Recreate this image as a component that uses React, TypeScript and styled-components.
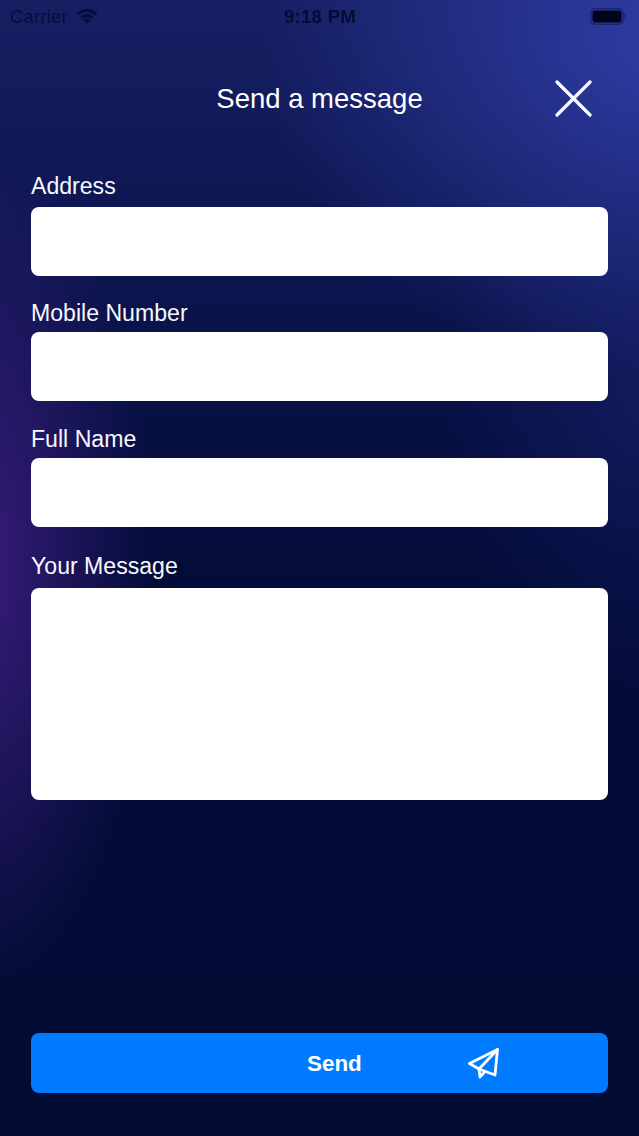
import React from "react";
import styled, { createGlobalStyle } from "styled-components";

const GlobalStyle = createGlobalStyle`
  html, body {
    margin: 0;
    padding: 0;
    background: #020b35;
  }
`;

const Page = styled.div`
  width: 639px;
  height: 1136px;
  overflow: hidden;
  display: flex;
  flex-direction: column;
  font-family: "Liberation Sans", Arial, sans-serif;
  color: #fff;
  background:
    radial-gradient(ellipse 400px 340px at 660px 40px, rgba(48, 62, 168, 0.95), rgba(48, 62, 168, 0) 100%),
    radial-gradient(ellipse 185px 430px at -30px 570px, rgba(62, 30, 130, 0.95), rgba(62, 30, 130, 0) 100%),
    radial-gradient(ellipse 220px 300px at 660px 400px, rgba(30, 38, 120, 0.5), rgba(30, 38, 120, 0) 100%),
    linear-gradient(180deg, #161f62 0%, #111a58 12%, #0a134a 28%, #030c3a 48%, #020b33 100%);
`;

const StatusBar = styled.div`
  height: 33px;
  flex: none;
  display: grid;
  grid-template-columns: 1fr auto 1fr;
  align-items: center;
  padding: 0 13px 0 10px;
  color: #070d3a;
  font-size: 18.5px;
  filter: blur(0.5px);
`;

const StatusLeft = styled.div`
  display: flex;
  align-items: center;
  gap: 8px;
`;

const Carrier = styled.span`
  letter-spacing: 0.2px;
`;

const Clock = styled.span`
  font-weight: 700;
  letter-spacing: 0.3px;
  color: #060b30;
  padding-left: 4px;
`;

const StatusRight = styled.div`
  display: flex;
  justify-content: flex-end;
`;

const Header = styled.header`
  position: relative;
  box-sizing: border-box;
  height: 140px;
  padding-bottom: 8px;
  flex: none;
  display: flex;
  align-items: center;
  justify-content: center;
`;

const Title = styled.h1`
  margin: 0;
  font-size: 27.5px;
  font-weight: 400;
`;

const CloseButton = styled.button`
  position: absolute;
  right: 47px;
  top: 47px;
  width: 37px;
  height: 37px;
  padding: 0;
  border: 0;
  background: none;
  color: #fff;
`;

const Form = styled.form`
  flex: 1;
  display: flex;
  flex-direction: column;
  padding: 0 31px;
`;

const Field = styled.label<{ $top: number }>`
  display: block;
  margin-top: ${(p) => p.$top}px;
`;

const FieldLabel = styled.span<{ $gap: number }>`
  display: block;
  margin-bottom: ${(p) => p.$gap}px;
  font-size: 23.1px;
  line-height: 27px;
  color: #f6f8ff;
`;

const Input = styled.div<{ $height: number }>`
  height: ${(p) => p.$height}px;
  background: #fff;
  border-radius: 8px;
`;

const SendButton = styled.button`
  margin-top: auto;
  margin-bottom: 43px;
  height: 60px;
  display: flex;
  align-items: center;
  padding: 2px 0 0 276px;
  gap: 104px;
  border: 0;
  border-radius: 8px;
  background: #007aff;
  color: #fff;
  font-family: inherit;
  font-size: 22.4px;
  font-weight: 700;
`;

const fields = [
  { label: "Address", top: 0, gap: 7, height: 69 },
  { label: "Mobile Number", top: 24, gap: 5, height: 69 },
  { label: "Full Name", top: 25, gap: 5, height: 69 },
  { label: "Your Message", top: 26, gap: 8, height: 212 },
];

const App: React.FC = () => {
  return (
    <>
      <GlobalStyle />
      <Page>
        <StatusBar>
          <StatusLeft>
            <Carrier>Carrier</Carrier>
            <svg width="22" height="17" viewBox="0 0 22 17" fill="currentColor">
              <path d="M11 1C7 1 3.400 2.500 .6 5.200l2 2.200C4.800 5.300 7.700 4 11 4s6.200 1.300 8.400 3.400l2-2.200C18.600 2.500 15 1 11 1z" />
              <path d="M11 6C8.500 6 6.200 7 4.400 8.600l2 2.200C7.600 9.700 9.200 9 11 9s3.400 .7 4.600 1.800l2-2.200C15.800 7 13.500 6 11 6z" />
              <path d="M11 10.600c-1.300 0-2.500 .5-3.400 1.300L11 15.800l3.400-3.900c-.9-.8-2.100-1.300-3.400-1.300z" />
            </svg>
          </StatusLeft>
          <Clock>9:18 PM</Clock>
          <StatusRight>
            <svg width="36" height="17" viewBox="0 0 36 17">
              <rect x="0.750" y="0.750" width="32.500" height="15.500" rx="4.500" fill="none" stroke="#1a2470" strokeWidth="1.500" />
              <rect x="2.500" y="2.500" width="29" height="12" rx="2.500" fill="#02041c" />
              <rect x="34.500" y="6" width="1.500" height="5" rx="0.700" fill="#1a2470" />
            </svg>
          </StatusRight>
        </StatusBar>
        <Header>
          <Title>Send a message</Title>
          <CloseButton aria-label="Close">
            <svg width="37" height="37" viewBox="0 0 37 37" fill="none" stroke="currentColor" strokeWidth="3.200" strokeLinecap="round">
              <path d="M2 2 L35 35 M35 2 L2 35" />
            </svg>
          </CloseButton>
        </Header>
        <Form>
          {fields.map((f) => (
            <Field key={f.label} $top={f.top}>
              <FieldLabel $gap={f.gap}>{f.label}</FieldLabel>
              <Input $height={f.height} />
            </Field>
          ))}
          <SendButton type="button">
            Send
            <svg width="34" height="32" viewBox="0 0 34 32" fill="none" stroke="currentColor" strokeWidth="2.800" strokeLinejoin="round" strokeLinecap="round">
              <path d="M31.500 1.500 L3.500 15.500 L13 21 L29 27 Z" />
              <path d="M31.500 1.500 L13 21 L14 29 L18.500 24" />
            </svg>
          </SendButton>
        </Form>
      </Page>
    </>
  );
};

export default App;
